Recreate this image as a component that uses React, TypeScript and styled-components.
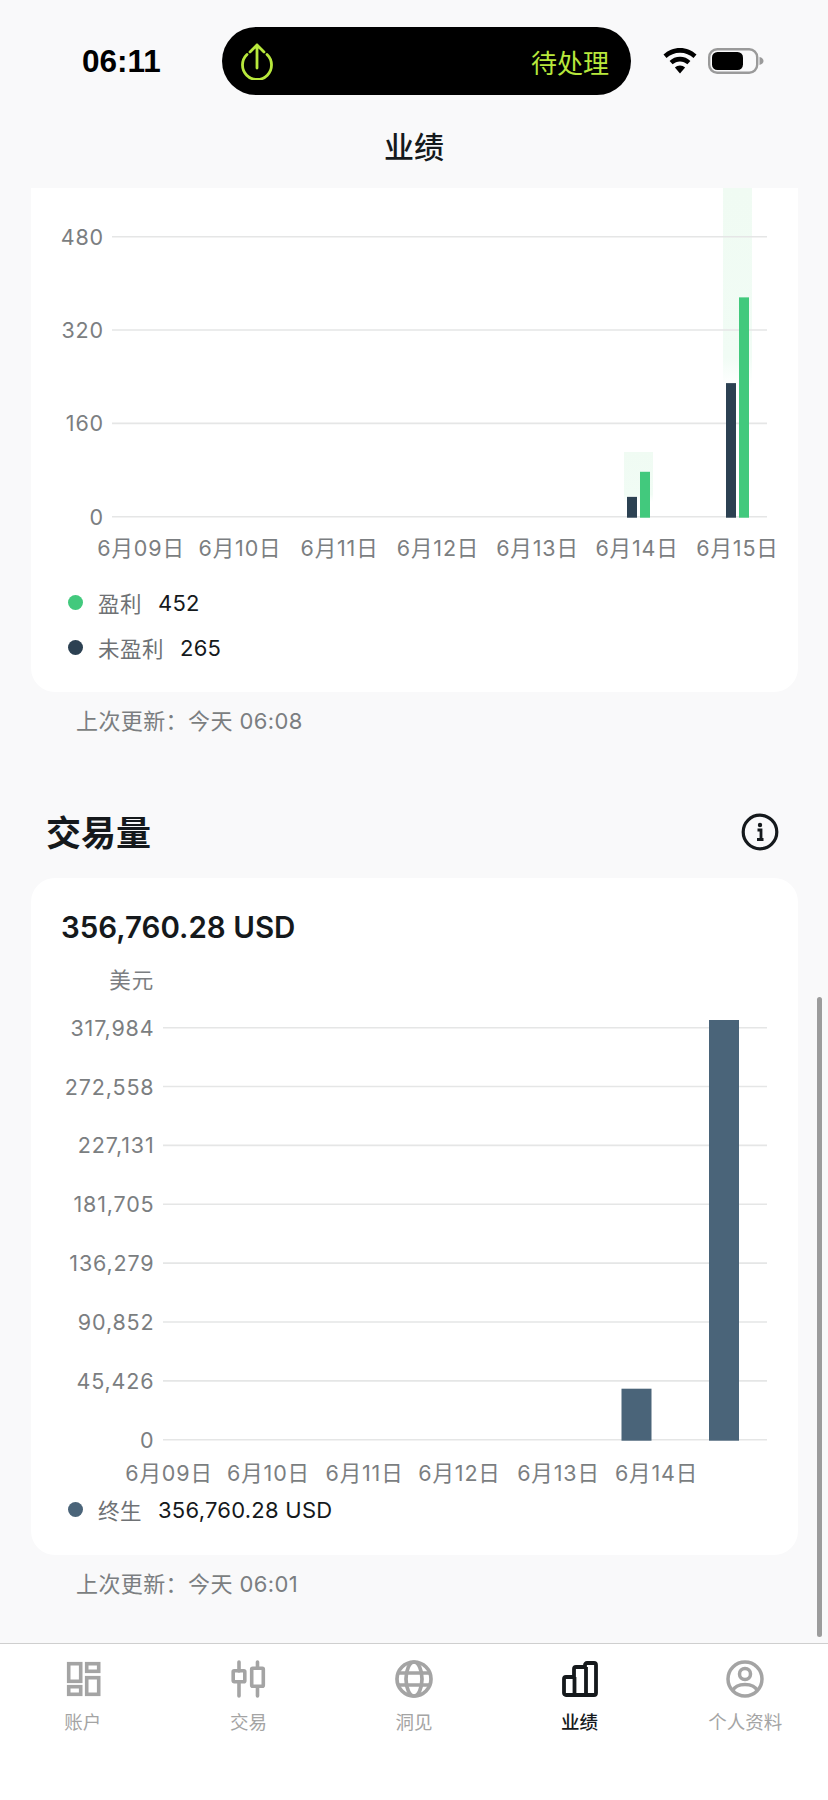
import React from 'react'
import styled, { createGlobalStyle } from 'styled-components'

const FONT = `Inter, "Noto Sans CJK SC", "Noto Sans", sans-serif`
const LIME = '#b8e83c'
const MUTED = '#a4a4a4'
const INK = '#15191c'

const GlobalStyle = createGlobalStyle`
  html, body {
    margin: 0;
    padding: 0;
    background: #f9f9fa;
  }
  body {
    font-family: ${FONT};
  }
`

const Screen = styled.div`
  position: relative;
  width: 828px;
  height: 1800px;
  display: flex;
  flex-direction: column;
  overflow: hidden;
  background: #f9f9fa;
  color: ${INK};
`

const Header = styled.header`
  height: 188px;
  flex: none;
`

const StatusBar = styled.div`
  display: flex;
  align-items: center;
  height: 68px;
  margin-top: 27px;
  padding-left: 82px;
`

const Clock = styled.div`
  width: 140px;
  font-family: "Liberation Sans", sans-serif;
  font-size: 31.5px;
  font-weight: 700;
  color: #000;
`

const Island = styled.div`
  width: 409px;
  height: 68px;
  box-sizing: border-box;
  padding: 0 22px 0 18px;
  display: flex;
  align-items: center;
  justify-content: space-between;
  border-radius: 34px;
  background: #000;
  color: ${LIME};
  font-size: 26px;
`

const StatusIcons = styled.div`
  display: flex;
  align-items: center;
  gap: 11px;
  margin-left: 32px;
`

const NavTitle = styled.h1`
  margin: 30px 0 0;
  text-align: center;
  font-size: 30px;
  line-height: 44px;
  font-weight: 500;
`

const Scroller = styled.main`
  flex: 1;
  min-height: 0;
  overflow: hidden;
  padding: 0 30px 0 31px;
`

const Card = styled.section<{ $flushTop?: boolean }>`
  background: #fff;
  border-radius: ${p => (p.$flushTop ? '0 0 24px 24px' : '24px')};
  padding-bottom: ${p => (p.$flushTop ? '22px' : '23px')};
`

const Chart = styled.svg`
  display: block;
  width: 767px;
`

const GridLine = styled.line`
  stroke: #e5e6e6;
  stroke-width: 1.6;
`

const AxisText = styled.text`
  font-family: ${FONT};
  font-size: 21.5px;
  letter-spacing: 0.85px;
  fill: #7b7e81;
`

const Legend = styled.div<{ $top: number }>`
  padding: ${p => p.$top}px 0 0 37px;
`

const LegendRow = styled.div`
  display: flex;
  align-items: center;
  height: 45px;
  font-size: 21.5px;
`

const Dot = styled.span<{ $color: string }>`
  width: 15px;
  height: 15px;
  margin-right: 15px;
  border-radius: 50%;
  background: ${p => p.$color};
`

const LegendLabel = styled.span`
  margin-right: 16px;
  color: #6f7275;
  letter-spacing: 0.5px;
`

const LegendValue = styled.span`
  color: ${INK};
  font-size: 22px;
  letter-spacing: 0.25px;
`

const UpdatedNote = styled.p<{ $top: number }>`
  margin: ${p => p.$top}px 0 0 45px;
  font-size: 22px;
  line-height: 30px;
  letter-spacing: 0.4px;
  color: #7b7e81;
`

const SectionHead = styled.div`
  display: flex;
  align-items: center;
  justify-content: space-between;
  height: 44px;
  margin: 74px 19px 24px 15px;
`

const SectionTitle = styled.h2`
  margin: 0;
  padding-bottom: 3px;
  font-size: 35px;
  font-weight: 600;
`

const Total = styled.div`
  padding: 31px 0 0 30px;
  font-size: 29.5px;
  font-weight: 600;
  line-height: 36px;
`

const Scrollbar = styled.div`
  position: absolute;
  left: 817px;
  top: 997px;
  width: 5px;
  height: 640px;
  border-radius: 3px;
  background: #9c9c9c;
`

const TabBar = styled.nav`
  flex: none;
  height: 156px;
  display: grid;
  grid-template-columns: repeat(5, 1fr);
  border-top: 1px solid #cfcfcf;
  background: #fff;
`

const Tab = styled.div<{ $active?: boolean }>`
  display: flex;
  flex-direction: column;
  align-items: center;
  padding-top: 16px;
  font-size: 18.5px;
  font-weight: ${p => (p.$active ? 500 : 400)};
  color: ${p => (p.$active ? INK : MUTED)};
  svg {
    display: block;
    margin-bottom: 10px;
  }
`

const UploadIcon = () => (
  <svg width="34" height="38" viewBox="0 0 34 38" fill="none" stroke={LIME} strokeWidth="2.8" strokeLinecap="round" strokeLinejoin="round">
    <path d="M7 12.5a14.5 14.5 0 1 0 20 0" />
    <path d="M17 26V3M10 10 17 3l7 7" />
  </svg>
)

const WifiIcon = () => (
  <svg width="34" height="26" viewBox="0 0 34 26" fill="#000">
    <path d="M17 0C10.6 0 4.8 2.5.5 6.6l3 3.4C7 6.700 11.800 4.700 17 4.700s10 2 13.500 5.300l3-3.400C29.200 2.500 23.400 0 17 0z" />
    <path d="M17 8.800c-4 0-7.700 1.600-10.400 4.100l3 3.400c2-1.800 4.600-2.900 7.400-2.900s5.400 1.100 7.400 2.900l3-3.400C24.700 10.400 21 8.800 17 8.800z" />
    <path d="M17 17.500c-2 0-3.800.8-5.100 2L17 25.500l5.100-6c-1.300-1.200-3.100-2-5.100-2z" />
  </svg>
)

const BatteryIcon = () => (
  <svg width="56" height="26" viewBox="0 0 56 26">
    <rect x="1.200" y="1.200" width="48" height="23.600" rx="8" fill="none" stroke="#9a9a9a" strokeWidth="2.400" />
    <rect x="4" y="4" width="31" height="18" rx="5.500" fill="#000" />
    <path d="M51.500 9c2.500.6 4 2.200 4 4s-1.500 3.400-4 4z" fill="#9a9a9a" />
  </svg>
)

const InfoIcon = () => (
  <svg width="38" height="38" viewBox="0 0 38 38" fill="none">
    <circle cx="19" cy="19" r="16.800" stroke={INK} strokeWidth="3.200" />
    <circle cx="19" cy="12" r="2.200" fill={INK} />
    <path d="M16.500 17H20v9.500M16 26.500h6.500" stroke={INK} strokeWidth="2.800" />
  </svg>
)

const AccountsIcon = () => (
  <svg width="38" height="38" viewBox="0 -1 38 38" fill="none" stroke={MUTED} strokeWidth="3.600">
    <rect x="4.700" y="2.700" width="12" height="17.600" />
    <rect x="22.700" y="2.700" width="12" height="7.600" />
    <rect x="4.700" y="25.700" width="12" height="7.600" />
    <rect x="22.700" y="16.700" width="12" height="16.600" />
  </svg>
)

const TradeIcon = () => (
  <svg width="38" height="38" viewBox="0 -1 38 38" fill="none" stroke={MUTED} strokeWidth="3.600">
    <path d="M10 1v9M10 21v14M28.500 1v6M28.500 26v9" strokeLinecap="round" />
    <rect x="4.200" y="9.700" width="11.600" height="11" rx="1" />
    <rect x="22.700" y="7.200" width="11.600" height="18" rx="1" />
  </svg>
)

const GlobeIcon = () => (
  <svg width="38" height="38" viewBox="0 0 38 38" fill="none" stroke={MUTED} strokeWidth="3.700">
    <circle cx="19" cy="19" r="17" />
    <ellipse cx="19" cy="19" rx="8" ry="17" />
    <path d="M3.500 13h31M3.500 25h31" />
  </svg>
)

const StatsIcon = () => (
  <svg width="38" height="38" viewBox="0 -1 38 38" fill="none" stroke={INK} strokeWidth="3.800" strokeLinejoin="round">
    <path d="M3 18a2 2 0 0 1 2-2h8v-8a2 2 0 0 1 2-2h9V4a2 2 0 0 1 2-2h7a2 2 0 0 1 2 2v28a2 2 0 0 1-2 2H5a2 2 0 0 1-2-2z" />
    <path d="M13.500 16v18M25 6v28" />
  </svg>
)

const ProfileIcon = () => (
  <svg width="38" height="38" viewBox="0 0 38 38" fill="none" stroke={MUTED} strokeWidth="3.500">
    <circle cx="19" cy="19" r="17" />
    <circle cx="19" cy="14" r="5.500" />
    <path d="M6.500 31c2-4.500 7-6.500 12.500-6.500s10.500 2 12.500 6.500" />
  </svg>
)

/* page x of each tick, taken off the card's left edge */
const CARD_X = 31

const toX = (pageX: number) => pageX - CARD_X

const profitDays = ['6月09日', '6月10日', '6月11日', '6月12日', '6月13日', '6月14日', '6月15日']
const profitLabelX = [141, 240, 339.500, 438, 537.500, 637, 737.500]
const profitTicks = [480, 320, 160, 0]

const PROFIT_TOP = 188
const PROFIT_BASE = 516.700 - PROFIT_TOP
const PROFIT_UNIT = 280 / 480

const profitBars = [
  { x: 627, width: 10, value: 34, color: '#2c4152' },
  { x: 640, width: 10, value: 77, color: '#42c97d' },
  { x: 726, width: 10, value: 229, color: '#2c4152' },
  { x: 739, width: 10, value: 376, color: '#42c97d' },
]

const ProfitChart = () => (
  <Chart height="377" viewBox="0 0 767 377">
    <defs>
      <linearGradient id="hoverFade" x1="0" y1="0" x2="0" y2="1">
        <stop offset="0" stopColor="#f0fbf3" />
        <stop offset="0.85" stopColor="#f1fcf5" />
        <stop offset="1" stopColor="#f5fdf8" stopOpacity="0" />
      </linearGradient>
    </defs>
    <rect x={toX(723)} y={0} width="29" height={388 - PROFIT_TOP} fill="url(#hoverFade)" />
    <rect x={toX(624)} y={452 - PROFIT_TOP} width="29" height="50" fill="url(#hoverFade)" />
    {profitTicks.map(tick => {
      const y = PROFIT_BASE - tick * PROFIT_UNIT
      return (
        <React.Fragment key={tick}>
          <GridLine x1={toX(112)} x2={toX(767)} y1={y} y2={y} />
          <AxisText x={toX(104)} y={y} textAnchor="end" dominantBaseline="central">{tick}</AxisText>
        </React.Fragment>
      )
    })}
    {profitBars.map(bar => (
      <rect
        key={bar.x}
        x={toX(bar.x)}
        y={PROFIT_BASE - bar.value * PROFIT_UNIT}
        width={bar.width}
        height={bar.value * PROFIT_UNIT + 1}
        fill={bar.color}
      />
    ))}
    {profitDays.map((day, i) => (
      <AxisText key={day} x={toX(profitLabelX[i])} y={548 - PROFIT_TOP} textAnchor="middle" dominantBaseline="central">{day}</AxisText>
    ))}
  </Chart>
)

const volumeTicks = ['0', '45,426', '90,852', '136,279', '181,705', '227,131', '272,558', '317,984']
const volumeDays = ['6月09日', '6月10日', '6月11日', '6月12日', '6月13日', '6月14日']
const volumeLabelX = [169, 268.500, 364.500, 459.500, 558.500, 656.500]

const VOLUME_TOP = 945
const VOLUME_BASE = 1439.700 - VOLUME_TOP
const VOLUME_STEP = 58.860

const volumeBars = [
  { x: 621.500, top: 1388.700 },
  { x: 709, top: 1020 },
]

const VolumeChart = () => (
  <Chart height="542" viewBox="0 0 767 542">
    <AxisText x={toX(154)} y={980 - VOLUME_TOP} textAnchor="end" dominantBaseline="central">美元</AxisText>
    {volumeTicks.map((tick, i) => {
      const y = VOLUME_BASE - i * VOLUME_STEP
      return (
        <React.Fragment key={tick}>
          <GridLine x1={toX(163)} x2={toX(767)} y1={y} y2={y} />
          <AxisText x={toX(154.500)} y={y} textAnchor="end" dominantBaseline="central">{tick}</AxisText>
        </React.Fragment>
      )
    })}
    {volumeBars.map(bar => (
      <rect
        key={bar.x}
        x={toX(bar.x)}
        y={bar.top - VOLUME_TOP}
        width="30"
        height={VOLUME_BASE - (bar.top - VOLUME_TOP) + 1}
        fill="#4a6479"
      />
    ))}
    {volumeDays.map((day, i) => (
      <AxisText key={day} x={toX(volumeLabelX[i])} y={1473 - VOLUME_TOP} textAnchor="middle" dominantBaseline="central">{day}</AxisText>
    ))}
  </Chart>
)

const tabs = [
  { label: '账户', icon: <AccountsIcon /> },
  { label: '交易', icon: <TradeIcon /> },
  { label: '洞见', icon: <GlobeIcon /> },
  { label: '业绩', icon: <StatsIcon />, active: true },
  { label: '个人资料', icon: <ProfileIcon /> },
]

const App: React.FC = () => (
  <>
    <GlobalStyle />
    <Screen>
      <Header>
        <StatusBar>
          <Clock>06:11</Clock>
          <Island>
            <UploadIcon />
            <span>待处理</span>
          </Island>
          <StatusIcons>
            <WifiIcon />
            <BatteryIcon />
          </StatusIcons>
        </StatusBar>
        <NavTitle>业绩</NavTitle>
      </Header>

      <Scroller>
        <Card $flushTop>
          <ProfitChart />
          <Legend $top={15}>
            <LegendRow>
              <Dot $color="#42c97d" />
              <LegendLabel>盈利</LegendLabel>
              <LegendValue>452</LegendValue>
            </LegendRow>
            <LegendRow>
              <Dot $color="#2c4152" />
              <LegendLabel>未盈利</LegendLabel>
              <LegendValue>265</LegendValue>
            </LegendRow>
          </Legend>
        </Card>
        <UpdatedNote $top={14}>上次更新：今天 06:08</UpdatedNote>

        <SectionHead>
          <SectionTitle>交易量</SectionTitle>
          <InfoIcon />
        </SectionHead>
        <Card>
          <Total>356,760.28 USD</Total>
          <VolumeChart />
          <Legend $top={0}>
            <LegendRow>
              <Dot $color="#4a6479" />
              <LegendLabel>终生</LegendLabel>
              <LegendValue>356,760.28 USD</LegendValue>
            </LegendRow>
          </Legend>
        </Card>
        <UpdatedNote $top={14}>上次更新：今天 06:01</UpdatedNote>
      </Scroller>

      <TabBar>
        {tabs.map(tab => (
          <Tab key={tab.label} $active={tab.active}>
            {tab.icon}
            <span>{tab.label}</span>
          </Tab>
        ))}
      </TabBar>
      <Scrollbar />
    </Screen>
  </>
)

export default App
